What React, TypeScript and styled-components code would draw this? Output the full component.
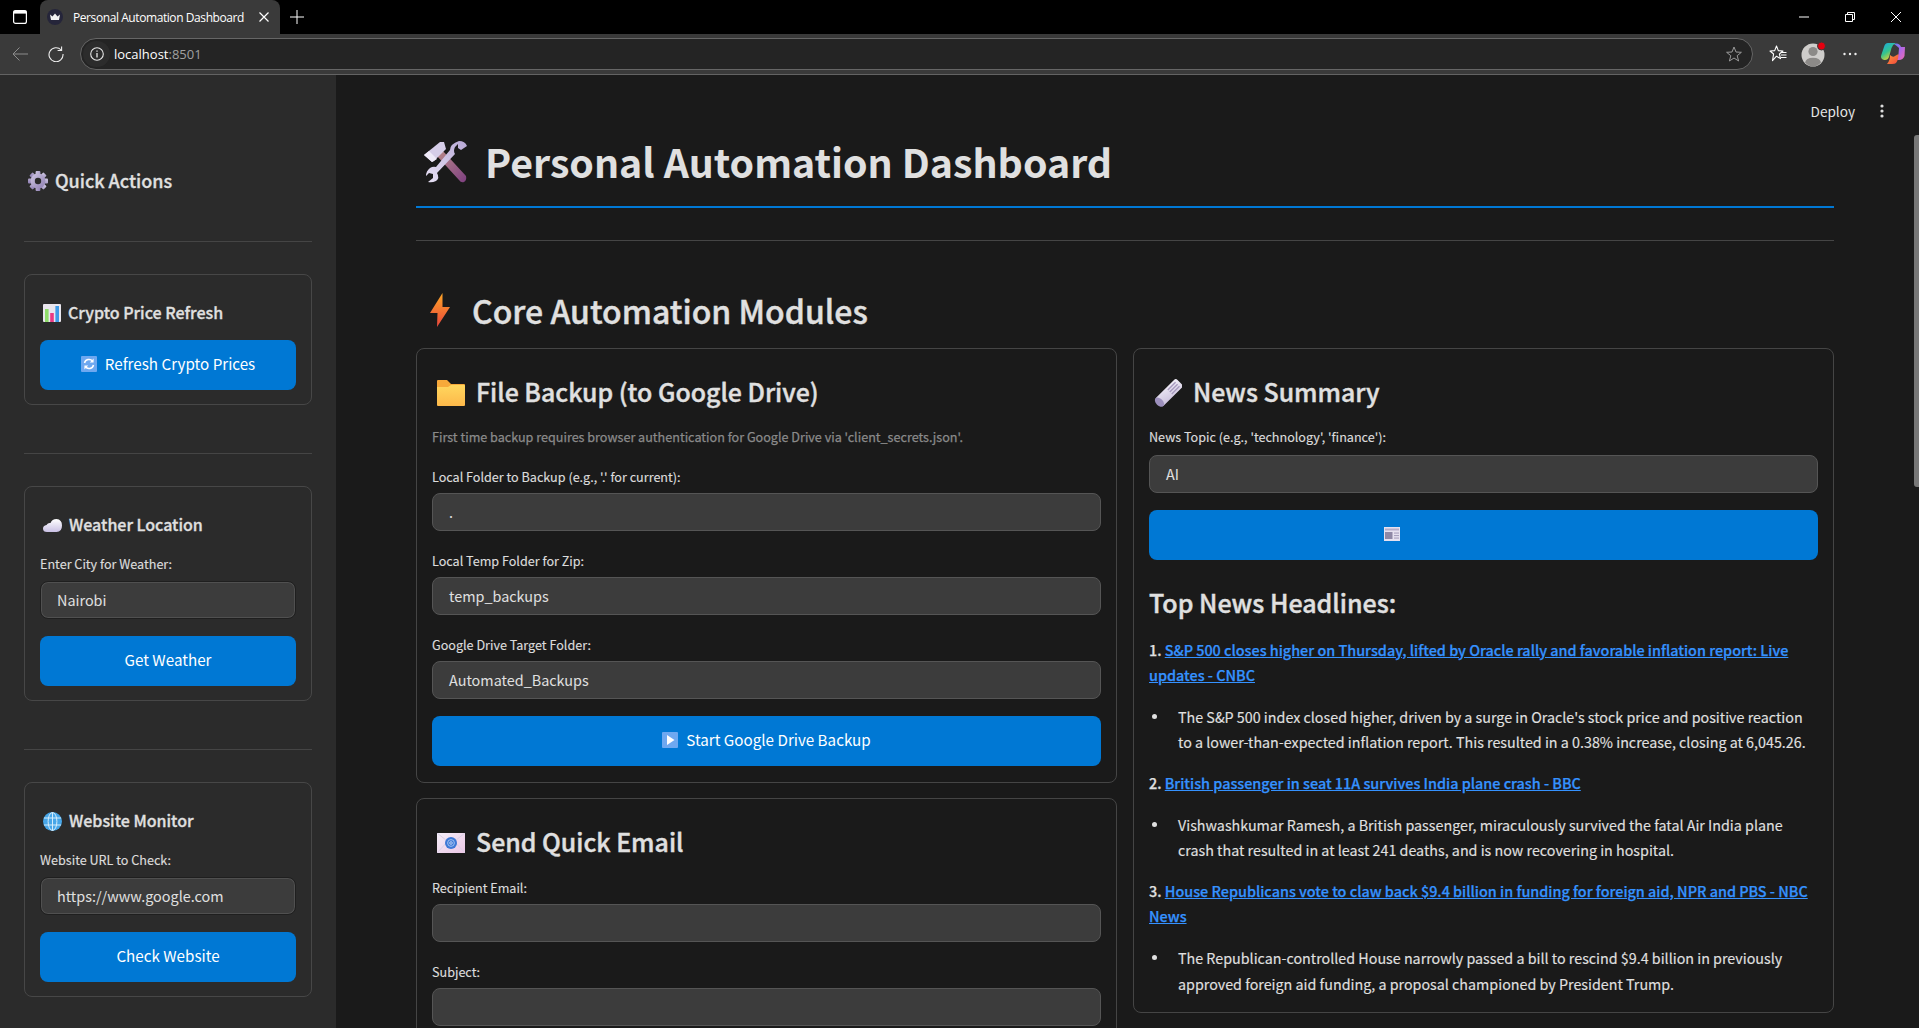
import React from "react";
import styled, { createGlobalStyle } from "styled-components";

const Global = createGlobalStyle`
  html, body { margin: 0; padding: 0; height: 100%; background: #1a1a1a; overflow: hidden; }
  * { box-sizing: border-box; }
`;

const SANS = `"Noto Sans CJK SC", "Source Sans Pro", "Noto Sans", sans-serif`;
const UI = `"Open Sans", "Noto Sans", sans-serif`;

const Page = styled.div`
  width: 100%;
  height: 100vh;
  display: flex;
  flex-direction: column;
  overflow: hidden;
  font-family: ${SANS};
  color: #e0e0e0;
`;
const TabStrip = styled.div`
  height: 34px;
  flex: none;
  background: #000;
  display: flex;
  align-items: flex-end;
  font-family: ${UI};
  color: #fff;
`;
const PaneButton = styled.div`
  width: 40px;
  height: 34px;
  display: flex;
  align-items: center;
  justify-content: center;
`;
const Tab = styled.div`
  width: 240px;
  height: 34px;
  background: #3a3a3a;
  border-radius: 8px 8px 0 0;
  display: flex;
  align-items: center;
  padding: 0 10px 0 7px;
`;
const TabTitle = styled.span`
  flex: 1;
  font-size: 12px;
  letter-spacing: -0.42px;
  margin-left: 10px;
  white-space: nowrap;
`;
const NewTab = styled.div`
  width: 34px;
  height: 34px;
  display: flex;
  align-items: center;
  justify-content: center;
`;
const WindowControls = styled.div`
  margin-left: auto;
  display: flex;
`;
const WindowButton = styled.div`
  width: 46px;
  height: 34px;
  display: flex;
  align-items: center;
  justify-content: center;
`;
const Toolbar = styled.div`
  height: 41px;
  flex: none;
  background: #3a3a3a;
  border-bottom: 1px solid #636363;
  display: flex;
  align-items: center;
  padding: 0 8px 1px 2px;
  font-family: ${UI};
`;
const ToolButton = styled.div`
  width: 36px;
  height: 32px;
  flex: none;
  display: flex;
  align-items: center;
  justify-content: center;
`;
const AddressBar = styled.div`
  flex: 1;
  height: 32px;
  margin: 0 7px 0 6px;
  background: #242424;
  border: 1px solid #666;
  border-radius: 16px;
  display: flex;
  align-items: center;
  padding-right: 10px;
`;
const InfoPill = styled.div`
  width: 27px;
  height: 26px;
  margin-left: 2px;
  border-radius: 13px;
  background: #2c2c2c;
  display: flex;
  align-items: center;
  justify-content: center;
`;
const Url = styled.span`
  flex: 1;
  margin-left: 4px;
  font-size: 13px;
  letter-spacing: 0px;
  color: #fff;
  span { color: #a0a0a0; }
`;
const Copilot = styled(ToolButton)`
  margin-left: 7px;
`;
const Body = styled.div`
  flex: 1;
  min-height: 0;
  display: flex;
  overflow: hidden;
`;
const Sidebar = styled.aside`
  width: 336px;
  flex: none;
  background: #2b2b2b;
  padding: 92px 24px 0;
  overflow: hidden;
`;
const SideHeading = styled.h2`
  margin: 0 0 46px;
  height: 28px;
  padding-bottom: 2px;
  display: flex;
  align-items: center;
  gap: 7px;
  padding-left: 4px;
  font-size: 18px;
  line-height: 28px;
  font-weight: 500;
  -webkit-text-stroke: 0.3px;
  svg { margin-top: 2px; }
`;
const Rule = styled.hr`
  margin: 0 0 32px;
  border: 0;
  height: 1px;
  background: #454545;
`;
const SideCard = styled.section`
  border: 1px solid #474747;
  border-radius: 8px;
  padding: 24px 15px 14px;
  margin-bottom: 48.5px;
`;
const SideTitle = styled.h3`
  margin: 0;
  height: 28px;
  padding-bottom: 2px;
  display: flex;
  align-items: center;
  gap: 7px;
  padding-left: 3px;
  font-size: 16px;
  line-height: 28px;
  font-weight: 500;
  -webkit-text-stroke: 0.3px;
  svg { margin-top: 2px; }
`;
const FieldLabel = styled.label`
  display: block;
  font-size: 12.6px;
  line-height: 20px;
  color: #dcdcdc;
  -webkit-text-stroke: 0.15px;
`;
const SideLabel = styled(FieldLabel)`
  margin-top: 15px;
`;
const InputBox = styled.div<{ $gap?: number }>`
  height: 38px;
  margin-top: ${(p) => p.$gap ?? 6}px;
  padding: 0 16px 2px;
  background: #3c3c3c;
  border: 1px solid #555;
  border-radius: 8px;
  display: flex;
  align-items: center;
  font-size: 14.4px;
  color: #e0e0e0;
`;
const SideInput = styled(InputBox)`
  border-color: #1f1f1f;
  box-shadow: inset 0 0 0 1px #505050;
`;
const Action = styled.div<{ $gap?: number }>`
  height: 49.6px;
  margin-top: ${(p) => p.$gap ?? 17}px;
  padding-bottom: 3px;
  background: #0078d4;
  border-radius: 8px;
  display: flex;
  align-items: center;
  justify-content: center;
  gap: 8px;
  font-size: 15.2px;
  color: #fff;
  svg { margin-top: 2px; }
`;
const NewsAction = styled(Action)`
  padding-right: 184px;
`;
const Main = styled.main`
  flex: 1;
  min-width: 0;
  position: relative;
  background: #1a1a1a;
  padding: 16px 85px 0 80px;
  overflow: hidden;
`;
const Thumb = styled.div`
  position: absolute;
  right: 0;
  top: 60px;
  width: 5px;
  height: 352px;
  border-radius: 3px 0 0 3px;
  background: #787878;
`;
const TopBar = styled.div`
  height: 40px;
  padding-bottom: 1px;
  display: flex;
  align-items: center;
  justify-content: flex-end;
  gap: 25px;
  margin-right: -50px;
  font-size: 13.6px;
  color: #e6e6e6;
`;
const Title = styled.h1`
  margin: 1px 0 0;
  height: 76px;
  padding-bottom: 16px;
  border-bottom: 2px solid #0078d4;
  display: flex;
  align-items: center;
  gap: 18px;
  padding-left: 7px;
  font-size: 39.3px;
  line-height: 60px;
  font-weight: 700;
  svg { margin-top: 1px; }
`;
const MainRule = styled.hr`
  margin: 32px 0 45px;
  border: 0;
  height: 1px;
  background: #454545;
`;
const Section = styled.h2`
  margin: 0 0 12px;
  height: 50px;
  padding-bottom: 3px;
  display: flex;
  align-items: center;
  gap: 22px;
  padding-left: 14px;
  font-size: 32px;
  line-height: 50px;
  font-weight: 500;
  -webkit-text-stroke: 0.4px;
  svg { margin-top: 1px; }
`;
const Columns = styled.div`
  display: grid;
  grid-template-columns: 1fr 1fr;
  gap: 16px;
  align-items: start;
`;
const Stack = styled.div`
  display: flex;
  flex-direction: column;
  gap: 15px;
`;
const Card = styled.section`
  border: 1px solid #454545;
  border-radius: 8px;
  padding: 16px 15px;
  min-width: 0;
`;
const CardTitle = styled.h3`
  margin: 8px 0 0;
  height: 40px;
  padding-bottom: 4px;
  display: flex;
  align-items: center;
  gap: 11px;
  padding-left: 5px;
  font-size: 24.9px;
  line-height: 40px;
  font-weight: 500;
  -webkit-text-stroke: 0.4px;
  svg { margin-top: 4px; }
`;
const Note = styled.p`
  margin: 14px 0 0;
  font-size: 12.6px;
  line-height: 20px;
  color: #8a8a8a;
  -webkit-text-stroke: 0.25px;
`;
const Field = styled.div<{ $gap?: number }>`
  margin-top: ${(p) => p.$gap ?? 20}px;
`;
const ListHeading = styled.h3`
  margin: 22px 0 0;
  font-size: 25px;
  line-height: 40px;
  font-weight: 500;
  -webkit-text-stroke: 0.4px;
`;
const Headline = styled.p`
  margin: 15px 0 0;
  font-size: 14.4px;
  line-height: 25.6px;
  font-weight: 500;
  -webkit-text-stroke: 0.25px;
`;
const HeadlineLink = styled.a`
  color: #3592ff;
  text-decoration: underline;
`;
const Summary = styled.div`
  margin-top: 16px;
  display: flex;
  font-size: 14.3px;
  line-height: 25.6px;
  color: #e0e0e0;
  -webkit-text-stroke: 0.12px;
  &::before {
    content: "";
    flex: none;
    width: 5px;
    height: 5px;
    border-radius: 50%;
    background: #e0e0e0;
    margin: 10px 21px 0 3px;
  }
`;

const Svg = styled.svg`
  flex: none;
  display: block;
`;

const GearGlyph = () => (
  <Svg width="20" height="20" viewBox="0 0 20 20">
    <defs><linearGradient id="gg" x1="0" y1="0" x2="1" y2="1"><stop offset="0" stopColor="#cfc7e2" /><stop offset="1" stopColor="#8f7fb3" /></linearGradient></defs>
    {[0, 45, 90, 135].map((a) => (
      <rect key={a} x="7.6" y="0" width="4.8" height="20" rx="1" fill="url(#gg)" transform={`rotate(${a} 10 10)`} />
    ))}
    <circle cx="10" cy="10" r="7.4" fill="url(#gg)" />
    <circle cx="10" cy="10" r="3.2" fill="#2b2b2b" />
  </Svg>
);
const ToolsGlyph = () => (
  <Svg width="44" height="42" viewBox="0 0 44 42">
    <defs>
      <linearGradient id="th" x1="0" y1="0" x2="1" y2="1"><stop offset="0" stopColor="#b98a8a" /><stop offset="1" stopColor="#7e3f80" /></linearGradient>
      <linearGradient id="tw" x1="0" y1="1" x2="1" y2="0"><stop offset="0" stopColor="#e8e2f5" /><stop offset="1" stopColor="#b7a8d6" /></linearGradient>
    </defs>
    <path d="M14 15 L20 10 L43 35 Q44 39 41 41 Q38 42 36 39 Z" fill="url(#th)" />
    <path d="M1 14 L17 1 L21 1 L23 8 L11 20 L9 21 Z" fill="#d6cde8" />
    <path d="M1 14 L6 10 L14 18 L9 21 Z" fill="#efeaf8" />
    <path d="M36 0 Q42 0 44 5 L38 9 L35 7 L35 3 L32 6 Q30 10 32 13 L14 32 Q17 37 13 40 Q9 42 5 41 L10 37 L10 33 L6 32 L3 35 Q3 30 7 27 Q10 25 13 26 L27 9 Q27 3 36 0 Z" fill="url(#tw)" />
  </Svg>
);
const BoltGlyph = () => (
  <Svg width="20" height="34" viewBox="0 0 20 34">
    <defs><linearGradient id="bo" x1="0.5" y1="0" x2="0.5" y2="1"><stop offset="0" stopColor="#ffa726" /><stop offset="1" stopColor="#e8453c" /></linearGradient></defs>
    <path d="M12.5 0 L0 20 H7.5 L7 34 L20 14 H12.5 Z" fill="url(#bo)" />
  </Svg>
);
const FolderGlyph = () => (
  <Svg width="28" height="26" viewBox="0 0 28 26">
    <defs><linearGradient id="fo" x1="0.5" y1="0" x2="0.5" y2="1"><stop offset="0" stopColor="#ffd75e" /><stop offset="1" stopColor="#fdb84a" /></linearGradient></defs>
    <path d="M1 0 H10 L14 4 H27 Q28 4 28 5 V9 H0 V1 Q0 0 1 0 Z" fill="#f7a93a" />
    <path d="M0 7 H11 L14 5 H27 Q28 5 28 6 V25 Q28 26 27 26 H1 Q0 26 0 25 Z" fill="url(#fo)" />
  </Svg>
);
const RollGlyph = () => (
  <Svg width="28" height="28" viewBox="0 0 28 28">
    <defs><linearGradient id="ro" x1="0" y1="1" x2="1" y2="0"><stop offset="0" stopColor="#c9bfdc" /><stop offset="1" stopColor="#f2eff7" /></linearGradient></defs>
    <g transform="rotate(-45 14 14)">
      <rect x="0" y="9" width="30" height="11" rx="2.5" fill="url(#ro)" />
      <rect x="16" y="11" width="11" height="1.4" fill="#a79abf" />
      <rect x="16" y="13.8" width="11" height="1.4" fill="#a79abf" />
      <rect x="16" y="16.6" width="11" height="1.4" fill="#a79abf" />
      <ellipse cx="1.5" cy="14.5" rx="3.5" ry="5.5" fill="#9d90bd" />
    </g>
  </Svg>
);
const MailGlyph = () => (
  <Svg width="28" height="20" viewBox="0 0 28 20">
    <defs><linearGradient id="ma" x1="0" y1="0" x2="1" y2="1"><stop offset="0" stopColor="#f4eef8" /><stop offset="1" stopColor="#ecc7e6" /></linearGradient></defs>
    <rect width="28" height="20" fill="url(#ma)" />
    <path d="M0 0 L14 11 L28 0 M0 20 L11 8 M28 20 L17 8" stroke="#d9cfe6" strokeWidth="1" fill="none" />
    <circle cx="14" cy="10" r="6" fill="#3d78d6" />
    <circle cx="14" cy="10" r="3.4" fill="none" stroke="#a9c8f5" strokeWidth="0.9" />
    <circle cx="14" cy="10" r="1.3" fill="none" stroke="#cfe0fa" strokeWidth="0.8" />
  </Svg>
);
const ChartGlyph = () => (
  <Svg width="18" height="18" viewBox="0 0 18 18">
    <rect width="18" height="18" rx="1" fill="#e9e6ee" />
    <rect x="2" y="5" width="3.6" height="13" fill="#8fdc6a" />
    <rect x="7.2" y="9" width="3.6" height="9" fill="#e93a83" />
    <rect x="12.4" y="2" width="3.6" height="16" fill="#3d9be8" />
  </Svg>
);
const RefreshGlyph = () => (
  <Svg width="16" height="16" viewBox="0 0 16 16">
    <rect width="16" height="16" rx="1" fill="#6ea8f0" />
    <path d="M3.5 7 A4.6 4.6 0 0 1 11.6 5.2 M12.5 9 A4.6 4.6 0 0 1 4.4 10.8" stroke="#fff" strokeWidth="1.5" fill="none" />
    <path d="M12.6 2.6 V6.4 H8.8 Z M3.4 13.4 V9.6 H7.2 Z" fill="#fff" />
  </Svg>
);
const CloudGlyph = () => (
  <Svg width="19" height="13" viewBox="0 0 19 13">
    <defs><linearGradient id="cl" x1="0.5" y1="0" x2="0.5" y2="1"><stop offset="0" stopColor="#ffffff" /><stop offset="1" stopColor="#c9c0e4" /></linearGradient></defs>
    <path d="M4 13 Q0 13 0 9.5 Q0 6.5 3.5 6 Q5 3.5 7.5 4 Q9 0 13.5 0 Q19 0.5 19 6.5 Q19 13 13.5 13 Z" fill="url(#cl)" />
  </Svg>
);
const GlobeGlyph = () => (
  <Svg width="19" height="19" viewBox="0 0 19 19">
    <circle cx="9.5" cy="9.5" r="9.5" fill="#47a6e8" />
    <g fill="none" stroke="#d4ecfb" strokeWidth="1">
      <ellipse cx="9.5" cy="9.5" rx="4.4" ry="9" />
      <path d="M9.5 0.5 V18.5 M1 6 H18 M1 13 H18" />
    </g>
  </Svg>
);
const PlayGlyph = () => (
  <Svg width="16" height="16" viewBox="0 0 16 16">
    <rect width="16" height="16" rx="1" fill="#6ea8f0" />
    <path d="M5 3 L12.5 8 L5 13 Z" fill="#fff" />
  </Svg>
);
const PaperGlyph = () => (
  <Svg width="16" height="14" viewBox="0 0 16 14">
    <rect width="16" height="14" fill="#e6e1f0" />
    <rect x="1" y="1.5" width="14" height="2" fill="#b5adc9" />
    <rect x="1" y="5" width="7.5" height="7" fill="#8f88a6" />
    <rect x="10" y="5.5" width="5" height="1.1" fill="#a9a1be" />
    <rect x="10" y="8" width="5" height="1.1" fill="#a9a1be" />
    <rect x="10" y="10.5" width="5" height="1.1" fill="#a9a1be" />
  </Svg>
);

const CrownFavicon = () => (
  <Svg width="16" height="16" viewBox="0 0 16 16">
    <circle cx="8" cy="8" r="8" fill="#25253a" />
    <path d="M3 5.5 L5.5 7.5 L8 4.5 L10.5 7.5 L13 5.5 L12 11 H4 Z" fill="#f2f2f2" />
  </Svg>
);
const PaneIcon = () => (
  <Svg width="14" height="14" viewBox="0 0 14 14" fill="none">
    <rect x="0.6" y="0.6" width="12.8" height="12.8" rx="2" stroke="#fff" strokeWidth="1.2" />
    <rect x="0.6" y="0.6" width="12.8" height="3" fill="#fff" />
  </Svg>
);
const Stroke = ({ d, size = 12, color = "#fff", w = 1 }: { d: string; size?: number; color?: string; w?: number }) => (
  <Svg width={size} height={size} viewBox={`0 0 ${size} ${size}`} fill="none">
    <path d={d} stroke={color} strokeWidth={w} />
  </Svg>
);
const StarList = () => (
  <Svg width="18" height="17" viewBox="0 0 18 17" fill="none">
    <path d="M7.5 1 L9.3 5.6 L14 6 L10.4 9 L11.5 13.6 L7.5 11.2 L3.5 15.6 L4.6 9 L1 6 L5.7 5.6 Z" stroke="#fff" strokeWidth="1.1" strokeLinejoin="round" />
    <path d="M12 7.5 H17.5 M12 10 H17.5 M12 12.5 H17.5" stroke="#fff" strokeWidth="1" />
  </Svg>
);
const Profile = () => (
  <Svg width="26" height="26" viewBox="0 0 26 26">
    <circle cx="12" cy="14" r="11.5" fill="#cfcdcb" />
    <circle cx="12" cy="10.5" r="4.6" fill="#8c8a88" />
    <path d="M4 21.5 Q5 16.8 12 16.8 Q19 16.8 20 21.5 Q16.5 25.5 12 25.5 Q7.5 25.5 4 21.5 Z" fill="#8c8a88" />
    <circle cx="20.5" cy="5" r="4" fill="#e4000f" stroke="#3a3a3a" strokeWidth="1" />
  </Svg>
);
const CopilotLogo = () => (
  <Svg width="24" height="21" viewBox="0 0 24 21">
    <defs>
      <linearGradient id="c1" x1="0" y1="0" x2="0.6" y2="1"><stop offset="0" stopColor="#1aa7e8" /><stop offset="0.55" stopColor="#33c48e" /><stop offset="1" stopColor="#f5d328" /></linearGradient>
      <linearGradient id="c2" x1="0" y1="0" x2="1" y2="1"><stop offset="0" stopColor="#5b7ff0" /><stop offset="0.5" stopColor="#b067e6" /><stop offset="1" stopColor="#f06bb0" /></linearGradient>
      <linearGradient id="c3" x1="0" y1="0" x2="1" y2="1"><stop offset="0" stopColor="#ff9a3c" /><stop offset="1" stopColor="#f0473c" /></linearGradient>
    </defs>
    <path d="M7 0 H15 Q11.5 1.5 10.5 5 L8 14 Q7 17 4 17 H3 Q-1 16 0.3 12 L3 4 Q4 0 7 0 Z" fill="url(#c1)" />
    <path d="M13 1 Q15.5 0 17 0.8 Q19.5 1.5 20 4 H24 L23.5 13 Q22 17 18 17 H14 Q17 15 17.5 11 L18 5 Q16 3 13 1 Z" fill="url(#c2)" />
    <path d="M9 12 Q12 15 14 13 L17.5 11 Q17.5 17 15 20 Q14 21 11 21 H6 Q9 18 9 12 Z" fill="url(#c3)" />
  </Svg>
);

export default function App() {
  return (
    <Page>
      <Global />
      <TabStrip>
        <PaneButton><PaneIcon /></PaneButton>
        <Tab>
          <CrownFavicon />
          <TabTitle>Personal Automation Dashboard</TabTitle>
          <Stroke d="M1.5 1.5 L10.5 10.5 M10.5 1.5 L1.5 10.5" w={1.2} />
        </Tab>
        <NewTab><Stroke size={14} d="M7 0 V14 M0 7 H14" /></NewTab>
        <WindowControls>
          <WindowButton><Stroke d="M1 6 H11" /></WindowButton>
          <WindowButton><Stroke d="M1.5 3.5 H8.5 V10.5 H1.5 Z M3.5 3.5 V1.5 H10.5 V8.5 H8.5" /></WindowButton>
          <WindowButton><Stroke d="M1 1 L11 11 M11 1 L1 11" /></WindowButton>
        </WindowControls>
      </TabStrip>
      <Toolbar>
        <ToolButton><Stroke size={16} color="#8c8c8c" d="M1 8 H16 M7.5 1.5 L1 8 L7.5 14.5" /></ToolButton>
        <ToolButton>
          <Svg width="16" height="16" viewBox="0 0 16 16" fill="none">
            <path d="M13.2 4 A7 7 0 1 0 15 8" stroke="#eee" strokeWidth="1.1" />
            <path d="M13.6 0.6 V4.5 H9.6" stroke="#eee" strokeWidth="1.1" />
          </Svg>
        </ToolButton>
        <AddressBar>
          <InfoPill>
            <Svg width="14" height="14" viewBox="0 0 14 14" fill="none">
              <circle cx="7" cy="7" r="6.3" stroke="#e8e8e8" strokeWidth="1.1" />
              <path d="M7 6 V10.5 M7 3.4 V4.8" stroke="#e8e8e8" strokeWidth="1.3" />
            </Svg>
          </InfoPill>
          <Url>localhost<span>:8501</span></Url>
          <Svg width="16" height="16" viewBox="0 0 16 16" fill="none">
            <path d="M8 1 L10 6 L15.4 6.3 L11.2 9.7 L12.6 15 L8 12 L3.4 15 L4.8 9.7 L0.6 6.3 L6 6 Z" stroke="#9a9a9a" strokeWidth="1" strokeLinejoin="round" />
          </Svg>
        </AddressBar>
        <ToolButton><StarList /></ToolButton>
        <ToolButton><Profile /></ToolButton>
        <ToolButton>
          <Svg width="14" height="4" viewBox="0 0 14 4">
            <circle cx="1.5" cy="2" r="1.2" fill="#eee" />
            <circle cx="7" cy="2" r="1.2" fill="#eee" />
            <circle cx="12.5" cy="2" r="1.2" fill="#eee" />
          </Svg>
        </ToolButton>
        <Copilot><CopilotLogo /></Copilot>
      </Toolbar>
      <Body>
        <Sidebar>
          <SideHeading><GearGlyph />Quick Actions</SideHeading>
          <Rule />
          <SideCard>
            <SideTitle><ChartGlyph />Crypto Price Refresh</SideTitle>
            <Action $gap={13}><RefreshGlyph />Refresh Crypto Prices</Action>
          </SideCard>
          <Rule />
          <SideCard>
            <SideTitle><CloudGlyph />Weather Location</SideTitle>
            <SideLabel>Enter City for Weather:</SideLabel>
            <SideInput $gap={7}>Nairobi</SideInput>
            <Action>Get Weather</Action>
          </SideCard>
          <Rule />
          <SideCard>
            <SideTitle><GlobeGlyph />Website Monitor</SideTitle>
            <SideLabel>Website URL to Check:</SideLabel>
            <SideInput $gap={7}>https://www.google.com</SideInput>
            <Action>Check Website</Action>
          </SideCard>
        </Sidebar>
        <Main>
          <Thumb />
          <TopBar>
            <span>Deploy</span>
            <Svg width="4" height="14" viewBox="0 0 4 14">
              <circle cx="2" cy="2" r="1.6" fill="#ddd" />
              <circle cx="2" cy="7" r="1.6" fill="#ddd" />
              <circle cx="2" cy="12" r="1.6" fill="#ddd" />
            </Svg>
          </TopBar>
          <Title><ToolsGlyph />Personal Automation Dashboard</Title>
          <MainRule />
          <Section><BoltGlyph />Core Automation Modules</Section>
          <Columns>
            <Stack>
              <Card>
                <CardTitle><FolderGlyph />File Backup (to Google Drive)</CardTitle>
                <Note>First time backup requires browser authentication for Google Drive via 'client_secrets.json'.</Note>
                <Field>
                  <FieldLabel>Local Folder to Backup (e.g., '.' for current):</FieldLabel>
                  <InputBox>.</InputBox>
                </Field>
                <Field>
                  <FieldLabel>Local Temp Folder for Zip:</FieldLabel>
                  <InputBox>temp_backups</InputBox>
                </Field>
                <Field>
                  <FieldLabel>Google Drive Target Folder:</FieldLabel>
                  <InputBox>Automated_Backups</InputBox>
                </Field>
                <Action><PlayGlyph />Start Google Drive Backup</Action>
              </Card>
              <Card>
                <CardTitle><MailGlyph />Send Quick Email</CardTitle>
                <Field $gap={15}>
                  <FieldLabel>Recipient Email:</FieldLabel>
                  <InputBox />
                </Field>
                <Field>
                  <FieldLabel>Subject:</FieldLabel>
                  <InputBox />
                </Field>
              </Card>
            </Stack>
            <Card>
              <CardTitle><RollGlyph />News Summary</CardTitle>
              <Field $gap={14}>
                <FieldLabel>News Topic (e.g., 'technology', 'finance'):</FieldLabel>
                <InputBox $gap={8}>AI</InputBox>
              </Field>
              <NewsAction><PaperGlyph /></NewsAction>
              <ListHeading>Top News Headlines:</ListHeading>
              <Headline>1. <HeadlineLink>S&amp;P 500 closes higher on Thursday, lifted by Oracle rally and favorable inflation report: Live updates - CNBC</HeadlineLink></Headline>
              <Summary><span>The S&amp;P 500 index closed higher, driven by a surge in Oracle's stock price and positive reaction to a lower-than-expected inflation report. This resulted in a 0.38% increase, closing at 6,045.26.</span></Summary>
              <Headline>2. <HeadlineLink>British passenger in seat 11A survives India plane crash - BBC</HeadlineLink></Headline>
              <Summary><span>Vishwashkumar Ramesh, a British passenger, miraculously survived the fatal Air India plane crash that resulted in at least 241 deaths, and is now recovering in hospital.</span></Summary>
              <Headline>3. <HeadlineLink>House Republicans vote to claw back $9.4 billion in funding for foreign aid, NPR and PBS - NBC News</HeadlineLink></Headline>
              <Summary><span>The Republican-controlled House narrowly passed a bill to rescind $9.4 billion in previously approved foreign aid funding, a proposal championed by President Trump.</span></Summary>
            </Card>
          </Columns>
        </Main>
      </Body>
    </Page>
  );
}
